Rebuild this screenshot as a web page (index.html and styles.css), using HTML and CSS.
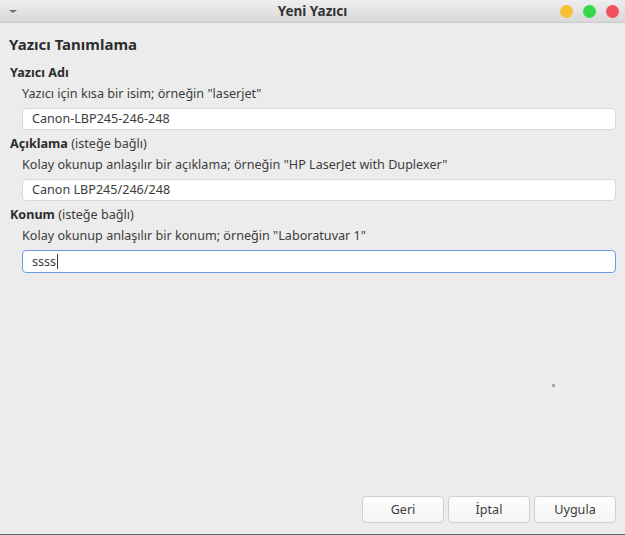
FILE: index.html
```html
<!DOCTYPE html>
<html lang="tr">
<head>
<meta charset="utf-8">
<title>Yeni Yazıcı</title>
<link rel="stylesheet" href="styles.css">
</head>
<body>
<div class="window">
  <header class="titlebar">
    <span class="menu-arrow"></span>
    <span class="title">Yeni Yazıcı</span>
    <div class="controls">
      <span class="dot yellow"></span>
      <span class="dot green"></span>
      <span class="dot red"></span>
    </div>
  </header>
  <main class="content">
    <h1 class="heading">Yazıcı Tanımlama</h1>
    <section class="field">
      <div class="label"><b>Yazıcı Adı</b></div>
      <div class="help">Yazıcı için kısa bir isim; örneğin "laserjet"</div>
      <div class="entry">Canon-LBP245-246-248</div>
    </section>
    <section class="field">
      <div class="label"><b>Açıklama</b> (isteğe bağlı)</div>
      <div class="help">Kolay okunup anlaşılır bir açıklama; örneğin "HP LaserJet with Duplexer"</div>
      <div class="entry">Canon LBP245/246/248</div>
    </section>
    <section class="field">
      <div class="label"><b>Konum</b> (isteğe bağlı)</div>
      <div class="help">Kolay okunup anlaşılır bir konum; örneğin "Laboratuvar 1"</div>
      <div class="entry focused">ssss<span class="caret"></span></div>
    </section>
    <div class="spacer"><span class="spinner-dot"></span></div>
    <footer class="buttons">
      <button class="btn">Geri</button>
      <button class="btn">İptal</button>
      <button class="btn">Uygula</button>
    </footer>
  </main>
  <div class="bottom-line"></div>
</div>
</body>
</html>
```

FILE: styles.css
```css
* { box-sizing: border-box; }
html, body {
  margin: 0;
  padding: 0;
  background: #ececec;
}
body {
  font-family: "Noto Sans", "Open Sans", sans-serif;
  font-size: 12.6px;
  color: #3c3c3c;
}
.window {
  width: 625px;
  height: 535px;
  display: flex;
  flex-direction: column;
  background: #ececec;
}
.titlebar {
  height: 23px;
  flex: none;
  display: flex;
  align-items: center;
  position: relative;
  background: linear-gradient(#eeeeee, #d8d8d8);
  border-bottom: 1px solid #cacaca;
}
.menu-arrow {
  margin-left: 9px;
  width: 0;
  height: 0;
  border-left: 4px solid transparent;
  border-right: 4px solid transparent;
  border-top: 3px solid #6e6e6e;
}
.title {
  position: absolute;
  left: 0;
  right: 0;
  text-align: center;
  font-weight: bold;
  font-size: 13.5px;
  color: #333333;
  line-height: 22px;
}
.controls {
  margin-left: auto;
  margin-right: 6px;
  display: flex;
  gap: 10px;
}
.dot {
  width: 13px;
  height: 13px;
  border-radius: 50%;
  display: block;
}
.yellow { background: #f8c135; }
.green { background: #34d844; }
.red { background: #f0515a; }
.content {
  flex: 1;
  display: flex;
  flex-direction: column;
  padding: 9px 9px 0 9px;
}
.heading {
  margin: 0 0 8px 0;
  font-size: 15px;
  font-weight: bold;
  color: #2e2e2e;
  line-height: 24px;
}
.field {
  display: flex;
  flex-direction: column;
}
.label {
  line-height: 18px;
  padding-left: 1px;
  color: #3c3c3c;
}
.label b { color: #2e2e2e; }
.help {
  line-height: 18px;
  margin: 3px 0 0 13px;
  color: #3c3c3c;
}
.entry {
  margin: 5px 0 5px 13px;
  height: 22px;
  background: #ffffff;
  border: 1px solid #d8d8d8;
  border-radius: 4px;
  padding: 0 9px;
  line-height: 20px;
  color: #3c3c3c;
  display: flex;
  align-items: center;
}
.entry.focused {
  border-color: #6d9be8;
  height: 23px;
}
.caret {
  display: inline-block;
  width: 1px;
  height: 15px;
  background: #3c3c3c;
  margin-left: 1px;
}
.spacer {
  flex: 1;
  position: relative;
}
.spinner-dot {
  position: absolute;
  left: 543px;
  top: 106px;
  width: 3px;
  height: 3px;
  background: #a0a0a0;
  border-radius: 1px;
}
.buttons {
  display: flex;
  justify-content: flex-end;
  gap: 4px;
  padding-bottom: 11px;
}
.btn {
  width: 82px;
  height: 27px;
  font: inherit;
  color: #3c3c3c;
  background: linear-gradient(#fdfdfd, #f4f4f4);
  border: 1px solid #cfcfcf;
  border-radius: 4px;
  padding: 0;
}
.bottom-line {
  height: 1px;
  flex: none;
  background: #5c6b7c;
}
```
